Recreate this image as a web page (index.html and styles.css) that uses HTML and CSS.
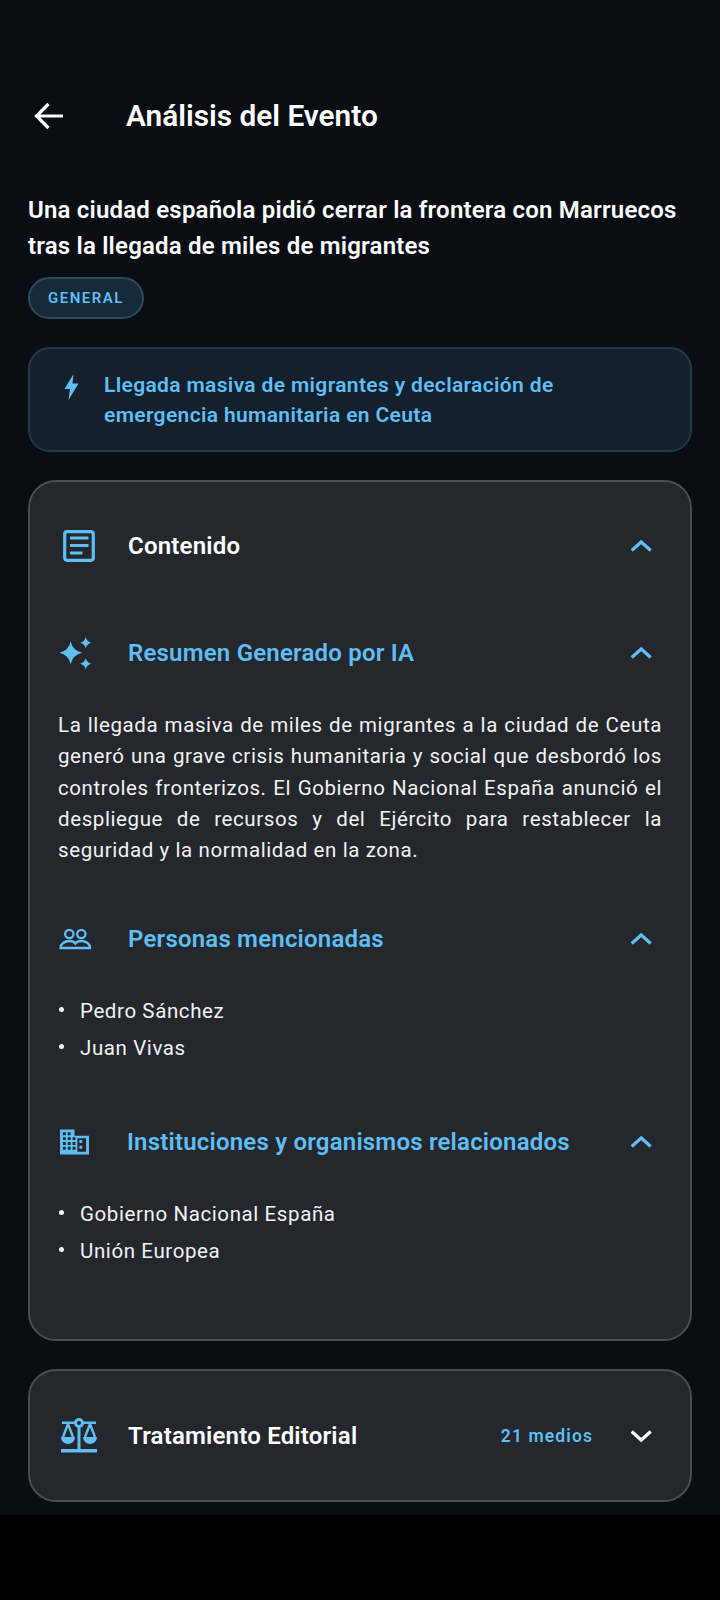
FILE: index.html
```html
<!DOCTYPE html>
<html lang="es">
<head>
<meta charset="utf-8">
<title>Análisis del Evento</title>
<link rel="stylesheet" href="styles.css">
</head>
<body>
<main class="screen">
  <header class="appbar">
    <svg class="back" viewBox="0 0 30 28" width="30" height="28"><path d="M29 14H3M14.500 2 2.500 14l12 12" fill="none" stroke="#fff" stroke-width="3.200"/></svg>
    <h1 class="appbar-title">Análisis del Evento</h1>
  </header>
  <h2 class="headline">Una ciudad española pidió cerrar la frontera con Marruecos tras la llegada de miles de migrantes</h2>
  <span class="chip">GENERAL</span>
  <section class="trigger">
    <svg class="bolt" viewBox="0 0 15 26" width="15" height="26"><path d="M9.500 0 .5 15h5.500L4.500 26 14.500 9.500H8.500z" fill="#5ebef6"/></svg>
    <p class="trigger-text">Llegada masiva de migrantes y declaración de emergencia humanitaria en Ceuta</p>
  </section>
  <section class="card card-main">
    <div class="row row-top">
      <svg class="icon icon-doc" viewBox="0 0 32 32" width="32" height="32"><rect x="1.700" y="1.700" width="28.600" height="28.600" rx="2.500" fill="none" stroke="#5ebef6" stroke-width="3.200"/><path d="M7 8h18.500M7 15.500h18.500M7 23h12.500" stroke="#5ebef6" stroke-width="3.200" fill="none"/></svg>
      <span class="row-title">Contenido</span>
      <svg class="chev" viewBox="0 0 24 14" width="24" height="14"><path d="M1.700 11.500 11.200 3l9.500 8.500" fill="none" stroke="#5ebef6" stroke-width="3.200"/></svg>
    </div>
    <div class="row row-sub row-summary">
      <svg class="icon icon-spark" viewBox="0 0 32 34" width="32" height="34"><path d="M10.700 5.200q2 9.500 11.500 11.500-9.500 2-11.500 11.500-2-9.500-11.500-11.500 9.500-2 11.500-11.500zM25.700 1q1 4.700 5.700 5.700-4.700 1-5.700 5.700-1-4.700-5.700-5.700 4.700-1 5.700-5.700zM25.700 22q1 4.700 5.700 5.700-4.700 1-5.700 5.700-1-4.700-5.700-5.700 4.700-1 5.700-5.700z" fill="#5ebef6"/></svg>
      <span class="row-title accent">Resumen Generado por IA</span>
      <svg class="chev" viewBox="0 0 24 14" width="24" height="14"><path d="M1.700 11.500 11.200 3l9.500 8.500" fill="none" stroke="#5ebef6" stroke-width="3.200"/></svg>
    </div>
    <p class="summary">La llegada masiva de miles de migrantes a la ciudad de Ceuta generó una grave crisis humanitaria y social que desbordó los controles fronterizos. El Gobierno Nacional España anunció el despliegue de recursos y del Ejército para restablecer la seguridad y la normalidad en la zona.</p>
    <div class="row row-sub row-people">
      <svg class="icon icon-people" viewBox="0 0 34 24" width="34" height="24"><g fill="none" stroke="#5ebef6" stroke-width="2.300"><circle cx="11.300" cy="7" r="4.200"/><circle cx="23.300" cy="7" r="4.200"/><path d="M2.500 21c0-4 4-7 8.800-7 3 0 5 1 6 2.500 1-1.500 3-2.500 6-2.500 4.800 0 8.800 3 8.800 7z"/></g></svg>
      <span class="row-title accent">Personas mencionadas</span>
      <svg class="chev" viewBox="0 0 24 14" width="24" height="14"><path d="M1.700 11.500 11.200 3l9.500 8.500" fill="none" stroke="#5ebef6" stroke-width="3.200"/></svg>
    </div>
    <ul class="list">
      <li>Pedro Sánchez</li>
      <li>Juan Vivas</li>
    </ul>
    <div class="row row-sub row-inst">
      <svg class="icon icon-inst" viewBox="0 0 30 26" width="29" height="26"><path fill-rule="evenodd" fill="#5ebef6" d="M0 0h15v6.500h15V26H0zM3 3v3h3V3zm5 0v3h3V3zM3 8v3h3V8zm5 0v3h3V8zm5 0v3h3V8zM3 13v3h3v-3zm5 0v3h3v-3zm5 0v3h3v-3zM3 18v3h3v-3zm5 0v3h3v-3zm5 0v3h3v-3zm5-9v14h9V9z"/><path fill="#5ebef6" d="M20 11h3v3h-3zM20 17h3v3h-3z"/></svg>
      <span class="row-title accent">Instituciones y organismos relacionados</span>
      <svg class="chev" viewBox="0 0 24 14" width="24" height="14"><path d="M1.700 11.500 11.200 3l9.500 8.500" fill="none" stroke="#5ebef6" stroke-width="3.200"/></svg>
    </div>
    <ul class="list">
      <li>Gobierno Nacional España</li>
      <li>Unión Europea</li>
    </ul>
  </section>
  <section class="card card-editorial">
    <div class="row">
      <svg class="icon icon-scale" viewBox="0 0 36 35" width="36" height="35"><g fill="#5ebef6"><rect x="0" y="31" width="36" height="3.500"/><rect x="16.500" y="6" width="3" height="26"/><rect x="1" y="3.500" width="34" height="2.500"/><circle cx="18" cy="5" r="5"/><path d="M0 19h14a7 7 0 0 1-14 0zM22 19h14a7 7 0 0 1-14 0z"/></g><circle cx="18" cy="5" r="2" fill="#24272c"/><path d="M7 6 2 19M7 6l5 13M29 6l-5 13M29 6l5 13" stroke="#5ebef6" stroke-width="2.400" fill="none"/></svg>
      <span class="row-title">Tratamiento Editorial</span>
      <span class="count">21 medios</span>
      <svg class="chev" viewBox="0 0 24 14" width="24" height="14"><path d="M1.700 2.500 11.200 11l9.500-8.500" fill="none" stroke="#fff" stroke-width="3.200"/></svg>
    </div>
  </section>
</main>
</body>
</html>
```
FILE: styles.css
```css
* { box-sizing: border-box; }
html, body { margin: 0; background: #000; }
body { font-family: Roboto, "Noto Sans", sans-serif; }
.screen {
  height: 1515px;
  overflow: hidden;
  background: #0a0d14;
  padding: 98px 28px 0;
  display: flex;
  flex-direction: column;
  align-items: stretch;
}
.appbar { display: flex; align-items: center; height: 36px; padding-left: 6px; }
.back { flex: none; }
.appbar-title { margin: 0 0 0 62px; font-size: 29.800px; font-weight: 600; color: #fff; line-height: 36px; }
.headline { margin: 59px 0 0; font-size: 24px; font-weight: 600; line-height: 35.500px; letter-spacing: .2px; color: #fff; }
.chip {
  align-self: flex-start;
  margin-top: 13px;
  height: 42px;
  padding: 0 18px;
  display: flex;
  align-items: center;
  border-radius: 21px;
  background: #172a3a;
  border: 2px solid #2d4a5f;
  color: #5ebef6;
  font-size: 15px;
  font-weight: 600;
  letter-spacing: 1.500px;
}
.trigger {
  margin-top: 28px;
  height: 105px;
  display: flex;
  gap: 25px;
  padding: 21px 40px 21px 34px;
  background: #14202c;
  border: 2px solid #23384a;
  border-radius: 22px;
}
.bolt { flex: none; margin-top: 4px; }
.trigger-text { margin: 0; font-size: 21px; font-weight: 600; line-height: 30px; color: #5ebef6; letter-spacing: .35px; }
.card { background: #24272c; border: 2px solid #4b4d51; border-radius: 28px; padding: 0 36px 0 28px; }
.card-main { margin-top: 28px; height: 861px; }
.card-editorial { margin-top: 28px; height: 133px; }
.card-editorial .row { height: 129px; }
.row { display: flex; align-items: center; }
.row .icon { flex: none; }
.row-top { height: 128px; }
.row-sub { height: 40px; }
.row-title { flex: 1; font-size: 24px; font-weight: 600; color: #fff; line-height: 32px; letter-spacing: .2px; }
.accent { color: #5ebef6; }
.icon-doc { margin: 0 33px 0 5px; }
.icon-spark { margin: 0 36px 0 2px; }
.icon-people { margin-right: 36px; }
.icon-inst { margin: 0 38px 0 2px; }
.icon-scale { margin: 0 31px 0 3px; }
.chev { flex: none; }
.count { color: #5ebef6; font-size: 17.500px; font-weight: 600; letter-spacing: 1.100px; margin-right: 37px; }
.row-summary { margin-top: 23px; }
.summary { margin: 37px -8px 0 0; text-align: justify; color: #f1f2f3; font-size: 20.500px; line-height: 31.300px; letter-spacing: .6px; }
.row-people { margin-top: 53px; }
.row-inst { margin-top: 56px; }
.list { list-style: none; margin: 34px 0 0; padding: 0; color: #f1f2f3; font-size: 20.500px; line-height: 36.500px; letter-spacing: .6px; }
.list li { position: relative; padding-left: 22px; }
.list li::before { content: ""; position: absolute; left: 1px; top: 14px; width: 5px; height: 5px; border-radius: 50%; background: #f1f2f3; }
```
